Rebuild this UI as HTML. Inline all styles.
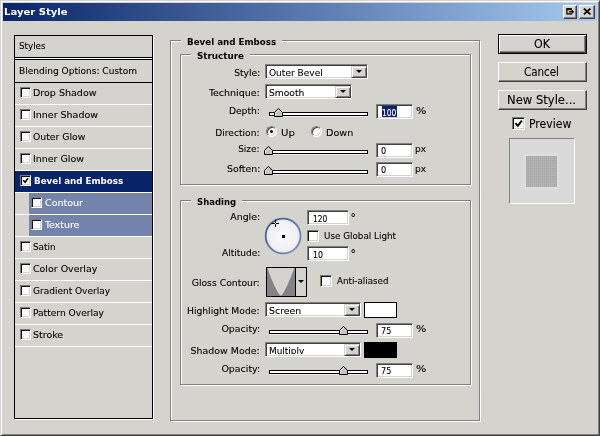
<!DOCTYPE html>
<html lang="en"><head><meta charset="utf-8"><title>Layer Style</title>
<style>
html,body{margin:0;padding:0;}
body{width:600px;height:436px;overflow:hidden;background:#d5d3cd;font-family:"DejaVu Sans Condensed","DejaVu Sans","Liberation Sans",sans-serif;font-size:10px;color:#000;position:relative;}
#dlg{position:absolute;left:0;top:0;width:600px;height:436px;overflow:hidden;will-change:transform;}
#dlg div,#dlg span,#dlg svg.thumb,#dlg svg.abs{position:absolute;box-sizing:border-box;}
.wide{font-family:"DejaVu Sans","Liberation Sans",sans-serif;}
.t{white-space:nowrap;display:block;-webkit-text-stroke:0.1px currentColor;}
.frame{border-top:1px solid #d5d3cd;border-left:1px solid #d5d3cd;border-right:1px solid #404040;border-bottom:1px solid #404040;
 box-shadow:inset 1px 1px 0 #fff, inset -1px -1px 0 #808080;}
.title{background:linear-gradient(90deg,#0a246a 0%,#a6caf0 100%);}
.cbtn{background:#d5d3cd;border:1px solid;border-color:#fff #404040 #404040 #fff;box-shadow:inset -1px -1px 0 #808080, inset 1px 1px 0 #d5d3cd;}
.panel{border:1px solid #000;box-shadow:1px 1px 0 #fff;}
.chk{background:#fff;border:1px solid;border-color:#7a7a7a #fff #fff #7a7a7a;box-shadow:inset 1px 1px 0 #111, inset -1px -1px 0 #d5d3cd;padding:0;}
.sunk{border:1px solid;border-color:#808080 #fff #fff #808080;box-shadow:inset 1px 1px 0 #404040, inset -1px -1px 0 #d5d3cd;}
.btn{background:#d5d3cd;border:1px solid;border-color:#d5d3cd #404040 #404040 #d5d3cd;box-shadow:inset 1px 1px 0 #fff, inset -1px -1px 0 #808080;}
.arr{position:absolute;left:4px;top:3px;width:0;height:0;border-left:3px solid transparent;border-right:3px solid transparent;border-top:3px solid #000;}
.track{background:#fff;border:1px solid #000;box-shadow:0 1px 0 #ecebe8;}
.radio{border-radius:50%;background:#fff;border:1px solid;border-color:#808080 #fff #fff #808080;box-shadow:inset 1px 1px 0 #404040, inset -1px -1px 0 #d5d3cd;}
.radio b{position:absolute;left:3px;top:3px;width:3px;height:3px;border-radius:50%;background:#000;}
.grp{border:1px solid #808080;box-shadow:1px 1px 0 #fff, inset 1px 1px 0 #fff;}
.pbtn{background:#d5d3cd;border:1px solid;border-color:#fff #404040 #404040 #fff;box-shadow:inset -1px -1px 0 #808080;}
.pbtn.def{border:1px solid #000;box-shadow:inset 1px 1px 0 #fff, inset -1px -1px 0 #404040, inset -2px -2px 0 #808080;}
.pv{background:#d9d9d9;border:1px solid;border-color:#808080 #fff #fff #808080;}
.pvi{left:16px;top:17px;width:31px;height:31px;background-color:#b5b5b5;background-image:repeating-linear-gradient(90deg,rgba(0,0,0,.035) 0,rgba(0,0,0,.035) 1px,transparent 1px,transparent 2px),repeating-linear-gradient(0deg,rgba(0,0,0,.035) 0,rgba(0,0,0,.035) 1px,transparent 1px,transparent 2px);box-shadow:0 0 3px 2px rgba(226,226,226,.8);}
</style></head>
<body><div id="dlg">
<div class="frame" style="left:0px;top:0px;width:600px;height:436px;"></div>
<div class="title" style="left:3px;top:3px;width:594px;height:18px;"></div>
<span id="t0" class="t wide" style="top:6px;font-size:9.5px;line-height:12px;font-weight:bold;-webkit-text-stroke:0;color:#fff;left:4.00px;transform-origin:0 0;transform:scaleX(1.0586);">Layer Style</span>
<div class="cbtn" style="left:563px;top:5px;width:14px;height:14px;"><svg width="10" height="10" viewBox="0 0 10 10" style="position:absolute;left:1px;top:1px"><rect x="1.3" y="1.1" width="5.6" height="2" fill="#000"/><path d="M1.9 2V6.8H6.3" fill="none" stroke="#000" stroke-width="1.2"/><path d="M6.3 6.2V7.4M6.3 3V3.6" fill="none" stroke="#000" stroke-width="1.2"/><path d="M3.9 4.8H8" stroke="#000" stroke-width="1.3"/><path d="M6.9 2.7L9.2 4.8L6.9 6.9Z" fill="#000"/></svg></div>
<div class="cbtn" style="left:579px;top:5px;width:16px;height:14px;"><svg width="12" height="10" viewBox="0 0 12 10" style="position:absolute;left:1px;top:1px"><path d="M2.9 1.6L9.4 7.4M9.4 1.6L2.9 7.4" stroke="#000" stroke-width="1.9"/></svg></div>
<div class="panel" style="left:14px;top:35px;width:139px;height:384px;"></div>
<div style="left:15px;top:57px;width:137px;height:1px;background:#000;"></div>
<div style="left:15px;top:58px;width:137px;height:1px;background:#fff;"></div>
<div style="left:15px;top:59px;width:137px;height:1px;background:#000;"></div>
<div style="left:15px;top:82px;width:137px;height:1px;background:#000;"></div>
<span id="t1" class="t" style="top:40px;font-size:9.5px;line-height:12px;left:18.60px;transform-origin:0 0;transform:scaleX(1.0223);">Styles</span>
<span id="t2" class="t" style="top:65px;font-size:9.5px;line-height:12px;left:18.60px;transform-origin:0 0;transform:scaleX(1.0574);">Blending Options: Custom</span>
<div style="left:15px;top:104px;width:137px;height:1px;background:#fff;"></div>
<div class="chk" style="left:20px;top:87px;width:11px;height:11px;"></div>
<span id="t3" class="t" style="top:87px;font-size:9.5px;line-height:12px;left:33.40px;transform-origin:0 0;transform:scaleX(1.1143);">Drop Shadow</span>
<div style="left:15px;top:126px;width:137px;height:1px;background:#fff;"></div>
<div class="chk" style="left:20px;top:109px;width:11px;height:11px;"></div>
<span id="t4" class="t" style="top:109px;font-size:9.5px;line-height:12px;left:33.40px;transform-origin:0 0;transform:scaleX(1.1096);">Inner Shadow</span>
<div style="left:15px;top:148px;width:137px;height:1px;background:#fff;"></div>
<div class="chk" style="left:20px;top:131px;width:11px;height:11px;"></div>
<span id="t5" class="t" style="top:131px;font-size:9.5px;line-height:12px;left:33.40px;transform-origin:0 0;transform:scaleX(1.0871);">Outer Glow</span>
<div style="left:15px;top:170px;width:137px;height:1px;background:#fff;"></div>
<div class="chk" style="left:20px;top:153px;width:11px;height:11px;"></div>
<span id="t6" class="t" style="top:153px;font-size:9.5px;line-height:12px;left:33.40px;transform-origin:0 0;transform:scaleX(1.1072);">Inner Glow</span>
<div style="left:15px;top:171px;width:137px;height:21px;background:#0a246a;"></div>
<div style="left:15px;top:192px;width:137px;height:1px;background:#fff;"></div>
<div class="chk" style="left:20px;top:175px;width:11px;height:11px;"><svg width="9" height="9" viewBox="0 0 9 9" style="position:absolute;left:0;top:0"><path d="M2.1 4.1L4.1 6.3L7 2.3" fill="none" stroke="#000" stroke-width="1.5"/></svg></div>
<span id="t7" class="t" style="top:175px;font-size:9.5px;line-height:12px;font-weight:bold;-webkit-text-stroke:0;color:#fff;left:33.60px;transform-origin:0 0;transform:scaleX(1.0200);">Bevel and Emboss</span>
<div style="left:29px;top:193px;width:123px;height:21px;background:#7383ab;"></div>
<div style="left:15px;top:214px;width:137px;height:1px;background:#fff;"></div>
<div class="chk" style="left:31px;top:197px;width:11px;height:11px;"></div>
<span id="t8" class="t" style="top:197px;font-size:9.5px;line-height:12px;color:#fff;left:44.70px;transform-origin:0 0;transform:scaleX(1.1136);">Contour</span>
<div style="left:29px;top:215px;width:123px;height:21px;background:#7383ab;"></div>
<div style="left:15px;top:236px;width:137px;height:1px;background:#fff;"></div>
<div class="chk" style="left:31px;top:219px;width:11px;height:11px;"></div>
<span id="t9" class="t" style="top:219px;font-size:9.5px;line-height:12px;color:#fff;left:44.70px;transform-origin:0 0;transform:scaleX(1.1063);">Texture</span>
<div style="left:15px;top:258px;width:137px;height:1px;background:#fff;"></div>
<div class="chk" style="left:20px;top:241px;width:11px;height:11px;"></div>
<span id="t10" class="t" style="top:241px;font-size:9.5px;line-height:12px;left:33.40px;transform-origin:0 0;transform:scaleX(1.0361);">Satin</span>
<div style="left:15px;top:280px;width:137px;height:1px;background:#fff;"></div>
<div class="chk" style="left:20px;top:263px;width:11px;height:11px;"></div>
<span id="t11" class="t" style="top:263px;font-size:9.5px;line-height:12px;left:33.40px;transform-origin:0 0;transform:scaleX(1.1039);">Color Overlay</span>
<div style="left:15px;top:302px;width:137px;height:1px;background:#fff;"></div>
<div class="chk" style="left:20px;top:285px;width:11px;height:11px;"></div>
<span id="t12" class="t" style="top:285px;font-size:9.5px;line-height:12px;left:33.40px;transform-origin:0 0;transform:scaleX(1.0528);">Gradient Overlay</span>
<div style="left:15px;top:324px;width:137px;height:1px;background:#fff;"></div>
<div class="chk" style="left:20px;top:307px;width:11px;height:11px;"></div>
<span id="t13" class="t" style="top:307px;font-size:9.5px;line-height:12px;left:33.40px;transform-origin:0 0;transform:scaleX(1.0657);">Pattern Overlay</span>
<div style="left:15px;top:346px;width:137px;height:1px;background:#fff;"></div>
<div class="chk" style="left:20px;top:329px;width:11px;height:11px;"></div>
<span id="t14" class="t" style="top:329px;font-size:9.5px;line-height:12px;left:33.40px;transform-origin:0 0;transform:scaleX(1.1108);">Stroke</span>
<div class="grp" style="left:170px;top:40px;width:310px;height:381px;"></div>
<div style="left:181.1px;top:35px;width:101.1px;height:12px;background:#d5d3cd;"></div>
<span id="t15" class="t" style="top:36px;font-size:9.5px;line-height:12px;font-weight:bold;-webkit-text-stroke:0;left:186.60px;transform-origin:0 0;transform:scaleX(1.0188);">Bevel and Emboss</span>
<div class="grp" style="left:180px;top:54px;width:291px;height:131px;"></div>
<div style="left:191.4px;top:49px;width:59.1px;height:12px;background:#d5d3cd;"></div>
<span id="t16" class="t" style="top:50px;font-size:9.5px;line-height:12px;font-weight:bold;-webkit-text-stroke:0;left:196.90px;transform-origin:0 0;transform:scaleX(1.0281);">Structure</span>
<div class="grp" style="left:180px;top:200px;width:291px;height:185px;"></div>
<div style="left:191.4px;top:195px;width:51.1px;height:12px;background:#d5d3cd;"></div>
<span id="t17" class="t" style="top:196px;font-size:9.5px;line-height:12px;font-weight:bold;-webkit-text-stroke:0;left:196.90px;transform-origin:0 0;transform:scaleX(0.9958);">Shading</span>
<span id="t18" class="t" style="top:67px;font-size:9.5px;line-height:12px;right:340.10px;transform-origin:100% 0;transform:scaleX(1.0756);">Style:</span>
<span id="t19" class="t" style="top:87px;font-size:9.5px;line-height:12px;right:340.10px;transform-origin:100% 0;transform:scaleX(1.1100);">Technique:</span>
<span id="t20" class="t" style="top:105px;font-size:9.5px;line-height:12px;right:340.10px;transform-origin:100% 0;transform:scaleX(1.0719);">Depth:</span>
<span id="t21" class="t" style="top:127px;font-size:9.5px;line-height:12px;right:340.10px;transform-origin:100% 0;transform:scaleX(1.0655);">Direction:</span>
<span id="t22" class="t" style="top:143px;font-size:9.5px;line-height:12px;right:340.10px;transform-origin:100% 0;transform:scaleX(1.0373);">Size:</span>
<span id="t23" class="t" style="top:163px;font-size:9.5px;line-height:12px;right:340.10px;transform-origin:100% 0;transform:scaleX(1.0985);">Soften:</span>
<div class="sunk" style="left:265px;top:64px;width:103px;height:15px;background:#fff;"></div>
<div class="btn" style="left:351px;top:66px;width:16px;height:12px;"><i class="arr"></i></div>
<span id="t24" class="t" style="top:67px;font-size:9.5px;line-height:12px;left:268.80px;transform-origin:0 0;transform:scaleX(1.0591);">Outer Bevel</span>
<div style="left:267px;top:76px;width:84px;height:1px;background:#fff;"></div>
<div style="left:267px;top:77px;width:84px;height:1px;background:#d5d3cd;"></div>
<div class="sunk" style="left:265px;top:84px;width:87px;height:15px;background:#fff;"></div>
<div class="btn" style="left:335px;top:86px;width:16px;height:12px;"><i class="arr"></i></div>
<span id="t25" class="t" style="top:87px;font-size:9.5px;line-height:12px;left:268.80px;transform-origin:0 0;transform:scaleX(1.0702);">Smooth</span>
<div style="left:267px;top:96px;width:68px;height:1px;background:#fff;"></div>
<div style="left:267px;top:97px;width:68px;height:1px;background:#d5d3cd;"></div>
<div class="track" style="left:269px;top:112px;width:99px;height:4px;"></div>
<svg class="thumb" style="left:274.0px;top:108px" width="9" height="9" viewBox="0 0 9 9"><path d="M4.5 0.4 L8.5 4.5 V8.5 H0.5 V4.5 Z" fill="#c6c4be" stroke="#000" stroke-width="1"/><path d="M4.5 1.8 L1.5 4.9 V7.5" fill="none" stroke="#eee" stroke-width="1"/></svg>
<div class="sunk" style="left:376px;top:104px;width:37px;height:15px;background:#fff;"></div>
<div style="left:382px;top:106px;width:15px;height:11px;background:#0a246a;"></div>
<span id="t26" class="t" style="top:107px;font-size:9.5px;line-height:12px;color:#fff;left:382.00px;transform-origin:0 0;transform:scaleX(0.8828);">100</span>
<span id="t27" class="t" style="top:105px;font-size:9.5px;line-height:12px;left:415.70px;transform-origin:0 0;transform:scaleX(1.2677);">%</span>
<div class="radio" style="left:266.0px;top:126.0px;width:11px;height:11px;"><b></b></div>
<span id="t28" class="t" style="top:127px;font-size:9.5px;line-height:12px;left:281.20px;transform-origin:0 0;transform:scaleX(1.1807);">Up</span>
<div class="radio" style="left:311.0px;top:126.0px;width:11px;height:11px;"></div>
<span id="t29" class="t" style="top:127px;font-size:9.5px;line-height:12px;left:325.50px;transform-origin:0 0;transform:scaleX(1.1272);">Down</span>
<div class="track" style="left:269px;top:150px;width:99px;height:4px;"></div>
<svg class="thumb" style="left:264.0px;top:146px" width="9" height="9" viewBox="0 0 9 9"><path d="M4.5 0.4 L8.5 4.5 V8.5 H0.5 V4.5 Z" fill="#c6c4be" stroke="#000" stroke-width="1"/><path d="M4.5 1.8 L1.5 4.9 V7.5" fill="none" stroke="#eee" stroke-width="1"/></svg>
<div class="sunk" style="left:376px;top:143px;width:37px;height:15px;background:#fff;"></div>
<span id="t30" class="t" style="top:145px;font-size:9.5px;line-height:12px;left:381.10px;transform-origin:0 0;transform:scaleX(0.9563);">0</span>
<span id="t31" class="t" style="top:143px;font-size:9.5px;line-height:12px;left:414.80px;transform-origin:0 0;transform:scaleX(1.0526);">px</span>
<div class="track" style="left:269px;top:170px;width:99px;height:4px;"></div>
<svg class="thumb" style="left:264.0px;top:166px" width="9" height="9" viewBox="0 0 9 9"><path d="M4.5 0.4 L8.5 4.5 V8.5 H0.5 V4.5 Z" fill="#c6c4be" stroke="#000" stroke-width="1"/><path d="M4.5 1.8 L1.5 4.9 V7.5" fill="none" stroke="#eee" stroke-width="1"/></svg>
<div class="sunk" style="left:376px;top:162px;width:37px;height:15px;background:#fff;"></div>
<span id="t32" class="t" style="top:164px;font-size:9.5px;line-height:12px;left:381.10px;transform-origin:0 0;transform:scaleX(0.9563);">0</span>
<span id="t33" class="t" style="top:163px;font-size:9.5px;line-height:12px;left:414.80px;transform-origin:0 0;transform:scaleX(1.0526);">px</span>
<span id="t34" class="t" style="top:211px;font-size:9.5px;line-height:12px;right:340.10px;transform-origin:100% 0;transform:scaleX(1.1022);">Angle:</span>
<span id="t35" class="t" style="top:247px;font-size:9.5px;line-height:12px;right:340.10px;transform-origin:100% 0;transform:scaleX(1.0529);">Altitude:</span>
<span id="t36" class="t" style="top:277px;font-size:9.5px;line-height:12px;right:340.10px;transform-origin:100% 0;transform:scaleX(1.0847);">Gloss Contour:</span>
<span id="t37" class="t" style="top:305px;font-size:9.5px;line-height:12px;right:340.10px;transform-origin:100% 0;transform:scaleX(1.0743);">Highlight Mode:</span>
<span id="t38" class="t" style="top:323px;font-size:9.5px;line-height:12px;right:340.10px;transform-origin:100% 0;transform:scaleX(1.1009);">Opacity:</span>
<span id="t39" class="t" style="top:345px;font-size:9.5px;line-height:12px;right:340.10px;transform-origin:100% 0;transform:scaleX(1.1018);">Shadow Mode:</span>
<span id="t40" class="t" style="top:363px;font-size:9.5px;line-height:12px;right:340.10px;transform-origin:100% 0;transform:scaleX(1.1009);">Opacity:</span>
<svg class="abs" style="left:264px;top:217px" width="38" height="38" viewBox="0 0 38 38"><defs><linearGradient id="ring" x1="0" y1="0" x2="1" y2="1"><stop offset="0" stop-color="#3f5487"/><stop offset="1" stop-color="#7f92bd"/></linearGradient><radialGradient id="face" cx="0.5" cy="0.5" r="0.5"><stop offset="0" stop-color="#fafafb"/><stop offset="0.8" stop-color="#f1f1f3"/><stop offset="1" stop-color="#e4e6ee"/></radialGradient></defs><circle cx="19.1" cy="19" r="17.4" fill="url(#face)" stroke="url(#ring)" stroke-width="1.8"/><rect x="18" y="18" width="3" height="3" fill="#000"/><path d="M11.5 2.5v7.5M7.5 6.5h7.5" stroke="#000" stroke-width="1"/><rect x="11" y="6" width="1" height="1" fill="#fff"/></svg>
<div class="sunk" style="left:307px;top:210px;width:42px;height:15px;background:#fff;"></div>
<span id="t41" class="t" style="top:213px;font-size:9.5px;line-height:12px;left:313.20px;transform-origin:0 0;transform:scaleX(0.8828);">120</span>
<span id="t42" class="t" style="top:211px;font-size:12px;line-height:15px;left:350.50px;transform-origin:0 0;">°</span>
<div class="chk" style="left:307px;top:230px;width:12px;height:12px;"></div>
<span id="t43" class="t" style="top:230px;font-size:9.5px;line-height:12px;left:323.50px;transform-origin:0 0;transform:scaleX(1.0286);">Use Global Light</span>
<div class="sunk" style="left:307px;top:246px;width:42px;height:15px;background:#fff;"></div>
<span id="t44" class="t" style="top:249px;font-size:9.5px;line-height:12px;left:313.20px;transform-origin:0 0;transform:scaleX(0.9195);">10</span>
<span id="t45" class="t" style="top:247px;font-size:12px;line-height:15px;left:350.50px;transform-origin:0 0;">°</span>
<div style="left:266px;top:267px;width:41px;height:30px;border:1px solid #000;box-sizing:border-box;background:#d5d3cd;"><svg width="28" height="28" viewBox="0.5 0 28 28" style="position:absolute;left:0;top:0"><rect width="29" height="28" fill="#838387"/><path d="M1 0 C 3.5 8, 8.5 20, 12.8 26.6 Q14.3 28.6 15.8 26.6 C 20 20, 25 8, 27.8 0 Z" fill="#d5d3cd"/></svg><div style="position:absolute;left:28px;top:0;width:1px;height:28px;background:#000"></div><i class="arr" style="left:30.5px;top:12px"></i></div>
<div class="chk" style="left:320px;top:275px;width:12px;height:12px;"></div>
<span id="t46" class="t" style="top:275px;font-size:9.5px;line-height:12px;left:337.20px;transform-origin:0 0;transform:scaleX(1.0211);">Anti-aliased</span>
<div class="sunk" style="left:265px;top:302px;width:96px;height:15px;background:#fff;"></div>
<div class="btn" style="left:344px;top:304px;width:16px;height:12px;"><i class="arr"></i></div>
<span id="t47" class="t" style="top:305px;font-size:9.5px;line-height:12px;left:268.80px;transform-origin:0 0;transform:scaleX(1.0996);">Screen</span>
<div style="left:267px;top:314px;width:77px;height:1px;background:#fff;"></div>
<div style="left:267px;top:315px;width:77px;height:1px;background:#d5d3cd;"></div>
<div style="left:364px;top:302px;width:33px;height:16px;background:#fff;border:1px solid #000;box-sizing:border-box;"></div>
<div class="track" style="left:269px;top:330px;width:99px;height:4px;"></div>
<svg class="thumb" style="left:339.0px;top:326px" width="9" height="9" viewBox="0 0 9 9"><path d="M4.5 0.4 L8.5 4.5 V8.5 H0.5 V4.5 Z" fill="#c6c4be" stroke="#000" stroke-width="1"/><path d="M4.5 1.8 L1.5 4.9 V7.5" fill="none" stroke="#eee" stroke-width="1"/></svg>
<div class="sunk" style="left:376px;top:323px;width:37px;height:15px;background:#fff;"></div>
<span id="t48" class="t" style="top:325px;font-size:9.5px;line-height:12px;left:381.10px;transform-origin:0 0;transform:scaleX(0.9471);">75</span>
<span id="t49" class="t" style="top:323px;font-size:9.5px;line-height:12px;left:415.70px;transform-origin:0 0;transform:scaleX(1.2677);">%</span>
<div class="sunk" style="left:265px;top:342px;width:96px;height:15px;background:#fff;"></div>
<div class="btn" style="left:344px;top:344px;width:16px;height:12px;"><i class="arr"></i></div>
<span id="t50" class="t" style="top:345px;font-size:9.5px;line-height:12px;left:268.80px;transform-origin:0 0;transform:scaleX(1.0454);">Multiply</span>
<div style="left:267px;top:354px;width:77px;height:1px;background:#fff;"></div>
<div style="left:267px;top:355px;width:77px;height:1px;background:#d5d3cd;"></div>
<div style="left:364px;top:342px;width:33px;height:16px;background:#000;"></div>
<div class="track" style="left:269px;top:370px;width:99px;height:4px;"></div>
<svg class="thumb" style="left:339.0px;top:366px" width="9" height="9" viewBox="0 0 9 9"><path d="M4.5 0.4 L8.5 4.5 V8.5 H0.5 V4.5 Z" fill="#c6c4be" stroke="#000" stroke-width="1"/><path d="M4.5 1.8 L1.5 4.9 V7.5" fill="none" stroke="#eee" stroke-width="1"/></svg>
<div class="sunk" style="left:376px;top:363px;width:37px;height:15px;background:#fff;"></div>
<span id="t51" class="t" style="top:365px;font-size:9.5px;line-height:12px;left:381.10px;transform-origin:0 0;transform:scaleX(0.9471);">75</span>
<span id="t52" class="t" style="top:363px;font-size:9.5px;line-height:12px;left:415.70px;transform-origin:0 0;transform:scaleX(1.2677);">%</span>
<div class="pbtn def" style="left:498px;top:34px;width:89px;height:20px;"></div>
<span id="t53" class="t" style="top:37px;font-size:12px;line-height:15px;left:533.80px;transform-origin:0 0;transform:scaleX(1.0271);">OK</span>
<div class="pbtn" style="left:498px;top:62px;width:89px;height:20px;"></div>
<span id="t54" class="t" style="top:65px;font-size:12px;line-height:15px;left:524.30px;transform-origin:0 0;transform:scaleX(0.9564);">Cancel</span>
<div class="pbtn" style="left:498px;top:90px;width:89px;height:20px;"></div>
<span id="t55" class="t" style="top:93px;font-size:12px;line-height:15px;left:507.30px;transform-origin:0 0;transform:scaleX(1.0716);">New Style...</span>
<div class="chk" style="left:512px;top:117px;width:13px;height:13px;"><svg width="11" height="11" viewBox="0 0 11 11" style="position:absolute;left:0;top:0"><path d="M2.4 5.1L4.9 7.8L8.8 2.7" fill="none" stroke="#000" stroke-width="1.9"/></svg></div>
<span id="t56" class="t" style="top:117px;font-size:12px;line-height:15px;left:529.40px;transform-origin:0 0;transform:scaleX(1.0075);">Preview</span>
<div class="pv" style="left:509px;top:138px;width:66px;height:66px;"><div class="pvi"></div></div>
</div></body></html>
